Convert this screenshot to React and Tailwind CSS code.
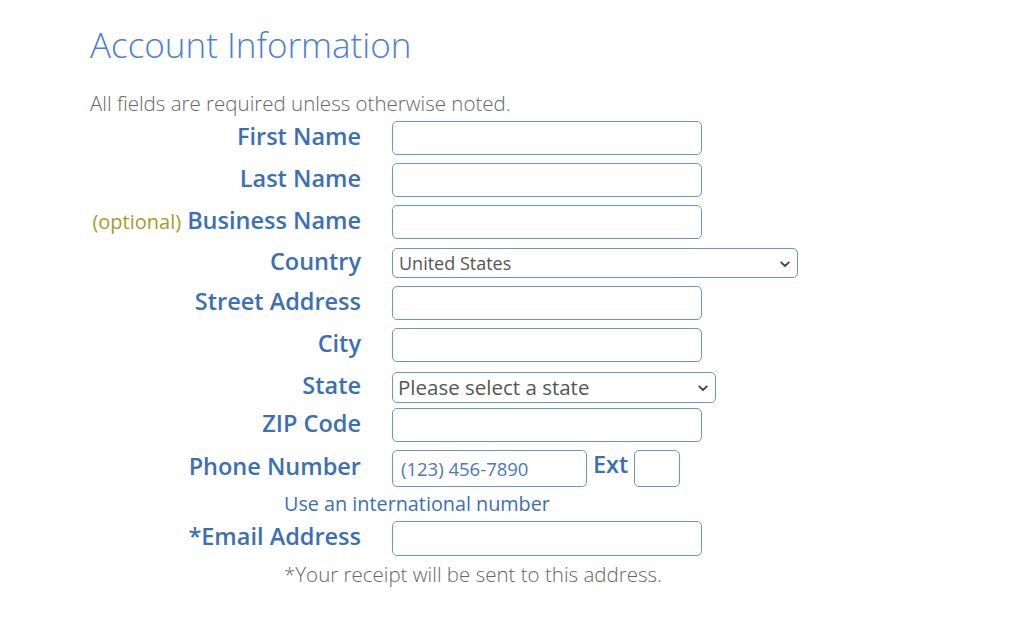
import React from "react";

const labelCls =
  "w-[271px] shrink-0 text-right text-[23.5px] leading-none font-semibold text-[#3b6fb6] pb-[3px]";
const inputCls =
  "border border-[#6d95d2] rounded-[5px] bg-white outline-none";

function Chevron({ className }) {
  return (
    <svg
      className={className}
      width="10"
      height="7"
      viewBox="0 0 10 7"
      fill="none"
    >
      <path
        d="M1.2 1.3 L5 5 L8.8 1.3"
        stroke="#444"
        strokeWidth="1.8"
        strokeLinecap="round"
        strokeLinejoin="round"
      />
    </svg>
  );
}

function Row({ label, children, h, mt, extraLabel }) {
  return (
    <div className="flex items-center" style={{ height: h, marginTop: mt }}>
      <div className={labelCls}>
        {extraLabel}
        {label}
      </div>
      <div className="ml-[31px] flex items-center h-full">{children}</div>
    </div>
  );
}

export default function App() {
  return (
    <div
      className="w-[1024px] h-[642px] bg-white overflow-hidden pl-[90px]"
      style={{ fontFamily: '"Open Sans", "Noto Sans", sans-serif' }}
    >
      <h1 className="pt-[22px] text-[35px] leading-[46px] font-light text-[#4a80d6]">
        Account Information
      </h1>
      <p className="mt-[22px] text-[20.5px] leading-[26px] font-light text-[#666]">
        All fields are required unless otherwise noted.
      </p>

      <div className="mt-[5px]">
        <Row label="First Name" h={34} mt={0}>
          <input className={`${inputCls} w-[310px] h-[34px]`} />
        </Row>
        <Row label="Last Name" h={34} mt={8}>
          <input className={`${inputCls} w-[310px] h-[34px]`} />
        </Row>
        <Row
          label="Business Name"
          h={34}
          mt={8}
          extraLabel={
            <span className="text-[20px] font-normal text-[#a39d2a] mr-[6px]">
              (optional)
            </span>
          }
        >
          <input className={`${inputCls} w-[310px] h-[34px]`} />
        </Row>
        <Row label="Country" h={30} mt={9}>
          <div
            className={`${inputCls} relative w-[406px] h-[30px] flex items-center pl-[6px] text-[18px] text-[#555]`}
          >
            United States
            <Chevron className="absolute right-[7px] top-[12px]" />
          </div>
        </Row>
        <Row label="Street Address" h={34} mt={8}>
          <input className={`${inputCls} w-[310px] h-[34px]`} />
        </Row>
        <Row label="City" h={34} mt={8}>
          <input className={`${inputCls} w-[310px] h-[34px]`} />
        </Row>
        <Row label="State" h={31} mt={10}>
          <div
            className={`${inputCls} relative w-[324px] h-[31px] flex items-center pl-[5px] text-[20.5px] text-[#555]`}
          >
            Please select a state
            <Chevron className="absolute right-[7px] top-[12px]" />
          </div>
        </Row>
        <Row label="ZIP Code" h={34} mt={5}>
          <input className={`${inputCls} w-[310px] h-[34px]`} />
        </Row>
        <Row label="Phone Number" h={37} mt={8}>
          <div
            className={`${inputCls} w-[195px] h-[37px] flex items-center pl-[8px] text-[18.5px] text-[#4a78bc]`}
          >
            (123) 456-7890
          </div>
          <span className="ml-[6px] text-[23.5px] leading-none font-semibold text-[#3b6fb6] pb-[7px]">
            Ext
          </span>
          <input className={`${inputCls} ml-[6px] w-[46px] h-[37px]`} />
        </Row>
        <div className="pl-[194px] mt-[4px] text-[19.8px] leading-[26px] text-[#3b6fb6]">
          Use an international number
        </div>
        <Row label="*Email Address" h={35} mt={4}>
          <input className={`${inputCls} w-[310px] h-[35px]`} />
        </Row>
        <div className="pl-[194px] mt-[5px] text-[20.5px] leading-[26px] font-light text-[#666]">
          *Your receipt will be sent to this address.
        </div>
      </div>
    </div>
  );
}
